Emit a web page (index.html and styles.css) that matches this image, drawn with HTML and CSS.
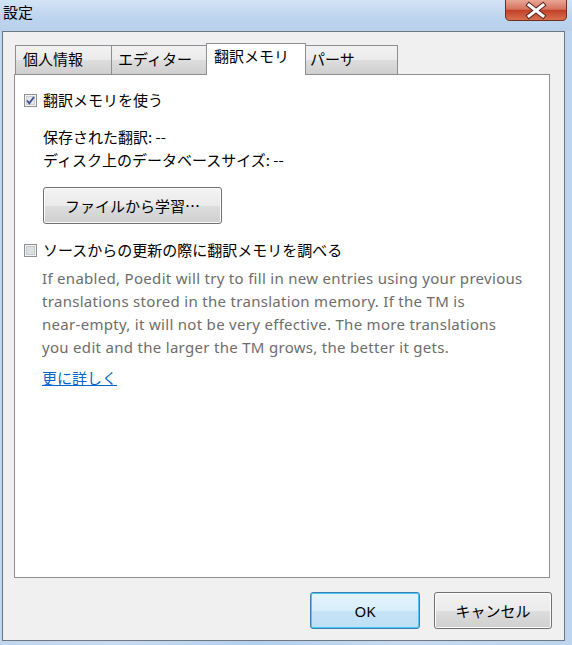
FILE: index.html
```html
<!DOCTYPE html>
<html lang="ja">
<head>
<meta charset="utf-8">
<title>設定</title>
<link rel="stylesheet" href="styles.css">
</head>
<body>
<div class="window">
  <div class="titlebar">
    <span class="title">設定</span>
    <div class="close">
      <svg width="62" height="21" viewBox="0 0 62 21">
        <defs>
          <linearGradient id="cg" x1="0" y1="0" x2="0" y2="1">
            <stop offset="0" stop-color="#e9a696"/>
            <stop offset="0.45" stop-color="#d5735e"/>
            <stop offset="0.5" stop-color="#c2402a"/>
            <stop offset="1" stop-color="#d8734e"/>
          </linearGradient>
        </defs>
        <path d="M0.5 0 V16 Q0.5 20.5 5 20.5 H57 Q61.5 20.5 61.5 16 V0" fill="url(#cg)" stroke="#6d2d22"/>
        <path d="M24 5 L38 16 M38 5 L24 16" stroke="#5a2a22" stroke-width="5" stroke-linecap="square"/>
        <path d="M24 5 L38 16 M38 5 L24 16" stroke="#ffffff" stroke-width="3" stroke-linecap="square"/>
      </svg>
    </div>
  </div>
  <div class="client">
    <div class="tabs-area">
      <div class="tabs">
        <div class="tab t1">個人情報</div>
        <div class="tab t2">エディター</div>
        <div class="tab active">翻訳メモリ</div>
        <div class="tab t4">パーサ</div>
      </div>
      <div class="panel">
        <div class="check-row">
          <span class="checkbox">
            <svg width="13" height="13" viewBox="0 0 13 13">
              <rect x="0.5" y="0.5" width="12" height="12" fill="#f4f4f4" stroke="#8e8f8f"/>
              <rect x="2.5" y="2.5" width="8" height="8" fill="#e3e6ea" stroke="#c9ccd1"/>
              <path d="M3 6.5 L5.3 9.3 L10 3" fill="none" stroke="#3d4f8f" stroke-width="1.8"/>
            </svg>
          </span>
          <span class="label">翻訳メモリを使う</span>
        </div>
        <div class="indent info">
          <div class="line">保存された翻訳: --</div>
          <div class="line">ディスク上のデータベースサイズ: --</div>
        </div>
        <div class="indent">
          <button class="btn learn">ファイルから学習…</button>
        </div>
        <div class="check-row second">
          <span class="checkbox">
            <svg width="13" height="13" viewBox="0 0 13 13">
              <rect x="0.5" y="0.5" width="12" height="12" fill="#f4f4f4" stroke="#8e8f8f"/>
              <rect x="2.5" y="2.5" width="8" height="8" fill="#dcdfe3" stroke="#c4c7cc"/>
            </svg>
          </span>
          <span class="label">ソースからの更新の際に翻訳メモリを調べる</span>
        </div>
        <p class="indent desc">If enabled, Poedit will try to fill in new entries using your previous<br>translations stored in the translation memory. If the TM is<br>near-empty, it will not be very effective. The more translations<br>you edit and the larger the TM grows, the better it gets.</p>
        <div class="indent more"><a href="#" class="link">更に詳しく</a></div>
      </div>
    </div>
    <div class="buttons">
      <button class="btn ok">OK</button>
      <button class="btn cancel">キャンセル</button>
    </div>
  </div>
</div>
</body>
</html>
```

FILE: styles.css
```css
* { box-sizing: border-box; }
html, body { margin: 0; padding: 0; }
body {
  width: 572px;
  height: 645px;
  overflow: hidden;
  font-family: "Noto Sans CJK JP", "Noto Sans", sans-serif;
  font-size: 15px;
  color: #000;
}
.window {
  width: 572px;
  height: 645px;
  background: linear-gradient(90deg, #c0d6ee 0%, #c8dcf1 20%, #b4cfec 45%, #c6dbf0 70%, #bcd4ee 100%);
}
.titlebar {
  height: 31px;
  display: flex;
  justify-content: space-between;
  align-items: flex-start;
  background: linear-gradient(180deg, #d2e3f5 0%, #bdd4ee 60%, #b8d0ea 100%);
}
.title {
  padding: 2px 0 0 3px;
  font-size: 15px;
  line-height: 20px;
}
.close {
  margin-right: 5px;
  height: 21px;
  display: flex;
}
.client {
  margin-left: 2px;
  width: 563px;
  height: 610px;
  border: 1px solid #6c7783;
  background: #f0f0f0;
}
.tabs-area {
  padding: 11px 14px 0 11px;
}
.tabs {
  display: flex;
  align-items: flex-end;
  height: 31px;
  padding-left: 1px;
}
.tab {
  height: 29px;
  border: 1px solid #8c8e94;
  border-bottom: none;
  background: linear-gradient(180deg, #f2f2f2 0%, #ebebeb 50%, #dddddd 51%, #cfcfcf 100%);
  padding: 1px 0 0 7px;
  line-height: 24px;
  white-space: nowrap;
}
.t1 { width: 97px; }
.t2 { width: 96px; margin-left: -1px; padding-left: 6px; }
.t4 { width: 93px; margin-left: -1px; padding-left: 4px; }
.tab.active {
  position: relative;
  z-index: 1;
  height: 32px;
  width: 100px;
  margin-left: -1px;
  margin-bottom: -1px;
  background: #fff;
  padding: 0 0 0 7px;
}
.panel {
  width: 536px;
  height: 504px;
  border: 1px solid #8c8e94;
  background: #fff;
  padding: 13px 0 0 9px;
}
.check-row {
  display: flex;
  align-items: center;
  height: 23px;
  gap: 6px;
}
.checkbox { display: flex; width: 13px; height: 13px; margin-top: 2px; }
.label { line-height: 23px; }
.indent { margin-left: 19px; }
.info { margin-top: 14px; }
.line { line-height: 23px; }
.btn {
  font-family: "Noto Sans CJK JP", "Noto Sans", sans-serif;
  font-size: 15px;
  font-weight: 400;
  color: #000;
  border: 1px solid #707070;
  border-radius: 3px;
  background: linear-gradient(180deg, #f2f2f2 0%, #ebebeb 50%, #dddddd 51%, #cfcfcf 100%);
  box-shadow: inset 0 0 0 1px #fcfcfc;
  padding: 0;
  cursor: default;
}
.learn {
  margin-top: 16px;
  width: 179px;
  height: 37px;
}
.second { margin-top: 14px; }
.desc {
  margin: 6px 0 0 18px;
  width: 500px;
  white-space: nowrap;
  font-family: "Noto Sans", "Noto Sans CJK JP", sans-serif;
  font-size: 15px;
  letter-spacing: 0.3px;
  line-height: 23px;
  color: #6d6d6d;
}
.more {
  margin-top: 7px;
  margin-left: 18px;
  line-height: 23px;
}
.link { color: #0066cc; text-decoration: underline; }
.buttons {
  display: flex;
  justify-content: flex-end;
  gap: 14px;
  padding: 14px 12px 0 0;
}
.ok {
  width: 110px;
  height: 37px;
  font-family: "Noto Sans", sans-serif;
  border-color: #3c7fb1;
  background: linear-gradient(180deg, #e5f3fb 0%, #d9eefb 50%, #c6e4f7 51%, #bddff5 100%);
  box-shadow: inset 0 0 0 1px #48c6f4;
}
.cancel {
  width: 118px;
  height: 37px;
}
```
